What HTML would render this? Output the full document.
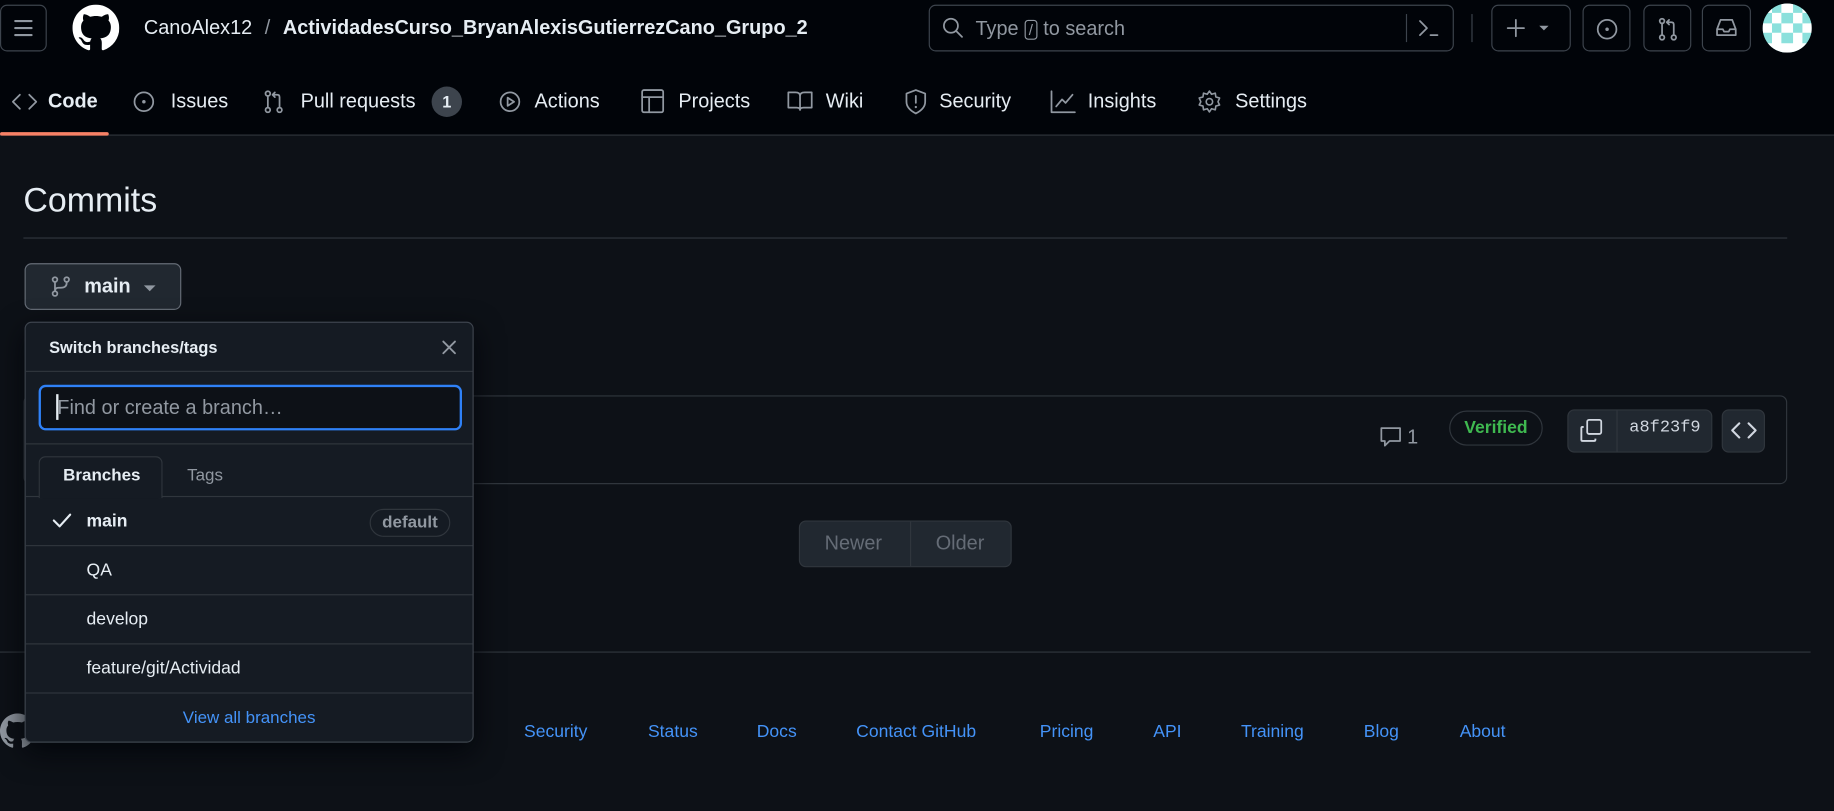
<!DOCTYPE html>
<html><head><meta charset="utf-8"><style>
*{box-sizing:border-box;margin:0;padding:0}
html,body{width:1834px;height:811px;overflow:hidden;background:#0d1117}
#w{position:absolute;left:0;top:0;width:1568px;height:693px;transform:scale(1.16964);transform-origin:0 0;font-family:"Liberation Sans",sans-serif;color:#e6edf3;background:#0d1117}
.a{position:absolute}
.hdr{left:0;top:0;width:1568px;height:116px;background:#010409;border-bottom:1px solid #30363d}
.btn{position:absolute;border:1px solid #3d444d;border-radius:6px}
.nav{position:absolute;top:77px;font-size:17px;color:#e6edf3;line-height:20px}
svg{position:absolute}
.ic{fill:none;stroke:#9198a1;stroke-width:1.5;stroke-linecap:round;stroke-linejoin:round}
.row{position:absolute;left:0;width:382px;height:42px;border-top:1px solid #30363d;font-size:15px;line-height:42px;padding-left:52px}
.ft{position:absolute;top:617px;font-size:15px;color:#4493f8}
</style></head><body><div id="w">
<div class="a hdr"></div>
<div class="btn" style="left:0;top:4px;width:40px;height:40px"></div>
<svg style="left:11px;top:15px" width="18" height="18" viewBox="0 0 18 18"><path d="M2 3h14M2 9h14M2 15h14" stroke="#9198a1" stroke-width="1.8" stroke-linecap="round"/></svg>
<svg style="left:62px;top:4px" width="40" height="40" viewBox="0 0 16 16"><path fill="#fff" d="M8 0C3.58 0 0 3.58 0 8c0 3.54 2.29 6.53 5.47 7.59.4.07.55-.17.55-.38 0-.19-.01-.82-.01-1.49-2.01.37-2.53-.49-2.69-.94-.09-.23-.48-.94-.82-1.13-.28-.15-.68-.52-.01-.53.63-.01 1.08.58 1.23.82.72 1.21 1.87.87 2.33.66.07-.52.28-.87.51-1.07-1.78-.2-3.64-.89-3.64-3.95 0-.87.31-1.59.82-2.15-.08-.2-.36-1.02.08-2.12 0 0 .67-.21 2.2.82.64-.18 1.32-.27 2-.27.68 0 1.36.09 2 .27 1.53-1.04 2.2-.82 2.2-.82.44 1.1.16 1.92.08 2.12.51.56.82 1.27.82 2.15 0 3.07-1.87 3.75-3.65 3.95.29.25.54.73.54 1.48 0 1.07-.01 1.93-.01 2.2 0 .21.15.46.55.38A8.013 8.013 0 0016 8c0-4.42-3.58-8-8-8z"/></svg>
<div class="a" style="left:123px;top:14px;font-size:17px;line-height:20px;white-space:nowrap">CanoAlex12 <span style="color:#9198a1;margin:0 6px">/</span> <b>ActividadesCurso_BryanAlexisGutierrezCano_Grupo_2</b></div>
<div class="btn" style="left:794px;top:4px;width:449px;height:40px;border-color:#3d444d"></div>
<svg style="left:805px;top:14px" width="20" height="20" viewBox="0 0 20 20"><circle cx="8" cy="8" r="6" class="ic" stroke-width="1.8"/><path d="M12.5 12.5l5 5" class="ic" stroke-width="1.8"/></svg>
<div class="a" style="left:834px;top:15px;font-size:17px;color:#9198a1;line-height:20px">Type <span style="border:1px solid #9198a1;border-radius:3px;padding:0 3px;font-size:13px">/</span> to search</div>
<div class="a" style="left:1202px;top:12px;width:1px;height:24px;background:#3d444d"></div>
<svg style="left:1212px;top:15px" width="20" height="18" viewBox="0 0 20 18"><path d="M2 3l6 6-6 6M11 15h6" class="ic" stroke-width="1.6"/></svg>
<div class="a" style="left:1258px;top:12px;width:1px;height:24px;background:#3d444d"></div>
<div class="btn" style="left:1275px;top:4px;width:68px;height:40px"></div>
<svg style="left:1287px;top:15px" width="44" height="18" viewBox="0 0 44 18"><path d="M9 2v14M2 9h14" class="ic" stroke-width="1.8"/><path d="M29 7h8l-4 4z" fill="#9198a1"/></svg>
<div class="btn" style="left:1353px;top:4px;width:41px;height:40px"></div>
<svg style="left:1364px;top:15px" width="20" height="20" viewBox="0 0 20 20"><circle cx="10" cy="10" r="8" class="ic"/><circle cx="10" cy="10" r="1.5" fill="#9198a1"/></svg>
<div class="btn" style="left:1405px;top:4px;width:41px;height:40px"></div>
<svg style="left:1416px;top:14px" width="20" height="22" viewBox="0 0 20 22"><circle cx="5" cy="4" r="2" class="ic"/><circle cx="5" cy="18" r="2" class="ic"/><circle cx="15" cy="18" r="2" class="ic"/><path d="M5 6v10M15 16V7q0-2-2-2h-3M11 3l-2 2 2 2" class="ic"/></svg>
<div class="btn" style="left:1455px;top:4px;width:42px;height:40px"></div>
<svg style="left:1466px;top:15px" width="20" height="18" viewBox="0 0 20 18"><path d="M2 10l3-8h10l3 8v5H2zM2 10h5l1 2h4l1-2h5" class="ic"/></svg>
<svg style="left:1507px;top:3px" width="42" height="42" viewBox="0 0 42 42"><defs><clipPath id="c"><circle cx="21" cy="21" r="21"/></clipPath></defs><g clip-path="url(#c)"><rect width="42" height="42" fill="#8be0dc"/><path fill="#fff" d="M0 0h8v8H0zM16 0h10v8H16zM34 0h8v8h-8zM8 8h8v9H8zM26 8h8v9h-8zM0 17h8v8H0zM16 17h10v8H16zM34 17h8v8h-8zM8 25h8v9H8zM26 25h8v9h-8zM0 34h42v8H0z"/></g></svg>

<!-- nav -->
<svg style="left:10px;top:78px" width="22" height="18" viewBox="0 0 22 18"><path d="M7 3L1 9l6 6M15 3l6 6-6 6" class="ic"/></svg>
<div class="nav" style="left:41px;font-weight:bold">Code</div>
<div class="a" style="left:0;top:113px;width:93px;height:3px;background:#f78166;border-radius:2px"></div>
<svg style="left:113px;top:77px" width="20" height="20" viewBox="0 0 20 20"><circle cx="10" cy="10" r="8" class="ic"/><circle cx="10" cy="10" r="1.5" fill="#9198a1"/></svg>
<div class="nav" style="left:146px">Issues</div>
<svg style="left:224px;top:76px" width="20" height="22" viewBox="0 0 20 22"><circle cx="5" cy="4" r="2" class="ic"/><circle cx="5" cy="18" r="2" class="ic"/><circle cx="15" cy="18" r="2" class="ic"/><path d="M5 6v10M15 16V7q0-2-2-2h-3M11 3l-2 2 2 2" class="ic"/></svg>
<div class="nav" style="left:257px">Pull requests</div>
<div class="a" style="left:369px;top:74px;width:26px;height:26px;border-radius:13px;background:#3d444d;font-size:14px;font-weight:bold;text-align:center;line-height:26px">1</div>
<svg style="left:426px;top:77px" width="20" height="20" viewBox="0 0 20 20"><circle cx="10" cy="10" r="8" class="ic"/><path d="M8 6.5v7l5.5-3.5z" class="ic"/></svg>
<div class="nav" style="left:457px">Actions</div>
<svg style="left:548px;top:76px" width="20" height="21" viewBox="0 0 20 21"><rect x="1" y="1" width="18" height="19" rx="1.5" class="ic"/><path d="M1 7h18M7 7v13" class="ic"/></svg>
<div class="nav" style="left:580px">Projects</div>
<svg style="left:673px;top:77px" width="22" height="18" viewBox="0 0 22 18"><path d="M1 2h6q4 0 4 3v12q0-2-3-2H1zM21 2h-6q-4 0-4 3v12q0-2 3-2h7z" class="ic"/></svg>
<div class="nav" style="left:706px">Wiki</div>
<svg style="left:773px;top:76px" width="20" height="22" viewBox="0 0 20 22"><path d="M10 1l8 3v7q0 6-8 10Q2 17 2 11V4z" class="ic"/><path d="M10 6v6" class="ic"/><circle cx="10" cy="15.5" r="1" fill="#9198a1"/></svg>
<div class="nav" style="left:803px">Security</div>
<svg style="left:898px;top:77px" width="22" height="20" viewBox="0 0 22 20"><path d="M1 1v18h20M5 14l5-6 3 3 6-7" class="ic"/></svg>
<div class="nav" style="left:930px">Insights</div>
<svg style="left:1023px;top:76px" width="22" height="22" viewBox="0 0 24 24"><circle cx="12" cy="12" r="3" class="ic"/><path d="M12 2l2 3 3.5-1 .5 3.5 3.5 1-1.5 3.5 1.5 3-3.5 1-.5 3.5-3.5-1-2 3-2-3-3.5 1-.5-3.5-3.5-1L4 12 2.5 8.5 6 7.5 6.5 4 10 5z" class="ic"/></svg>
<div class="nav" style="left:1056px">Settings</div>

<!-- content -->
<div class="a" style="left:20px;top:155px;font-size:29px;line-height:34px">Commits</div>
<div class="a" style="left:20px;top:203px;width:1508px;height:1px;background:#30363d"></div>

<div class="a" style="left:20px;top:338px;width:1508px;height:76px;border:1px solid #30363d;border-radius:6px"></div>
<svg style="left:1179px;top:363px" width="20" height="20" viewBox="0 0 20 20"><path d="M2 3h16v11H9l-4 4v-4H2z" class="ic"/></svg>
<div class="a" style="left:1203px;top:364px;font-size:17px;color:#9198a1">1</div>
<div class="a" style="left:1239px;top:351px;width:80px;height:30px;border:1px solid #30363d;border-radius:15px;color:#3fb950;font-size:15px;font-weight:bold;text-align:center;line-height:28px">Verified</div>
<div class="a" style="left:1340px;top:350px;width:124px;height:37px;border:1px solid #30363d;border-radius:6px;background:#212830"></div>
<div class="a" style="left:1382px;top:351px;width:1px;height:35px;background:#30363d"></div>
<svg style="left:1350px;top:357px" width="22" height="22" viewBox="0 0 22 22"><rect x="7" y="2" width="12" height="12" rx="1.5" class="ic" stroke="#d1d7e0" style="stroke:#d1d7e0"/><path d="M4 8H3q-1 0-1 1v10q0 1 1 1h10q1 0 1-1v-1" style="fill:none;stroke:#d1d7e0;stroke-width:1.6"/></svg>
<div class="a" style="left:1393px;top:358px;font-family:'Liberation Mono',monospace;font-size:14.5px;color:#d1d7e0">a8f23f9</div>
<div class="a" style="left:1472px;top:350px;width:37px;height:37px;border:1px solid #30363d;border-radius:6px;background:#212830"></div>
<svg style="left:1480px;top:359px" width="22" height="18" viewBox="0 0 22 18"><path d="M7 3L1 9l6 6M15 3l6 6-6 6" style="fill:none;stroke:#d1d7e0;stroke-width:1.8;stroke-linecap:round;stroke-linejoin:round"/></svg>

<div class="a" style="left:683px;top:445px;width:182px;height:40px;border:1px solid #30363d;border-radius:6px;background:#212830;color:#656c76;font-size:17px;line-height:38px"><span style="position:absolute;left:21px">Newer</span><span style="position:absolute;left:94px;top:0;width:1px;height:38px;background:#30363d"></span><span style="position:absolute;left:116px">Older</span></div>

<div class="a" style="left:0;top:557px;width:1548px;height:1px;background:#30363d"></div>
<svg style="left:0;top:610px" width="30" height="30" viewBox="0 0 16 16"><path fill="#9198a1" d="M8 0C3.58 0 0 3.58 0 8c0 3.54 2.29 6.53 5.47 7.59.4.07.55-.17.55-.38 0-.19-.01-.82-.01-1.49-2.01.37-2.530-.49-2.69-.94-.09-.23-.48-.94-.82-1.13-.28-.15-.68-.52-.01-.53.63-.01 1.08.58 1.23.82.72 1.21 1.87.87 2.33.66.07-.52.28-.87.51-1.07-1.78-.2-3.64-.89-3.64-3.95 0-.87.31-1.59.82-2.150-.08-.2-.36-1.02.08-2.12 0 0 .67-.21 2.2.82.64-.18 1.32-.27 2-.27.68 0 1.36.09 2 .27 1.53-1.04 2.2-.82 2.2-.82.44 1.1.16 1.92.08 2.12.51.56.82 1.27.82 2.15 0 3.07-1.87 3.75-3.65 3.95.29.25.54.73.54 1.48 0 1.07-.01 1.93-.01 2.2 0 .21.15.46.55.38A8.013 8.013 0 0016 8c0-4.42-3.58-8-8-8z"/></svg>
<div class="ft" style="left:448px">Security</div>
<div class="ft" style="left:554px">Status</div>
<div class="ft" style="left:647px">Docs</div>
<div class="ft" style="left:732px">Contact GitHub</div>
<div class="ft" style="left:889px">Pricing</div>
<div class="ft" style="left:986px">API</div>
<div class="ft" style="left:1061px">Training</div>
<div class="ft" style="left:1166px">Blog</div>
<div class="ft" style="left:1248px">About</div>

<!-- branch button -->
<div class="a" style="left:21px;top:225px;width:134px;height:40px;border:1px solid #656c76;border-radius:6px;background:#212830"></div>
<svg style="left:43px;top:236px" width="18" height="18" viewBox="0 0 18 18"><circle cx="4" cy="3" r="2" class="ic"/><circle cx="4" cy="15" r="2" class="ic"/><circle cx="14" cy="3" r="2" class="ic"/><path d="M4 5v8M14 5v1q0 4-5 4H7q-3 0-3 3" class="ic"/></svg>
<div class="a" style="left:72px;top:235px;font-size:17px;font-weight:bold;line-height:20px">main</div>
<svg style="left:122px;top:242px" width="12" height="8" viewBox="0 0 12 8"><path d="M1 2h10L6 7z" fill="#9198a1"/></svg>

<!-- dropdown -->
<div class="a" style="left:21px;top:275px;width:384px;height:360px;background:#151b23;border:1px solid #3d444d;border-radius:6px;box-shadow:0 8px 24px rgba(1,4,9,.8);overflow:hidden">
 <div class="a" style="left:20px;top:13px;font-size:14px;font-weight:bold;line-height:17px">Switch branches/tags</div>
 <svg style="left:355px;top:14px" width="14" height="14" viewBox="0 0 14 14"><path d="M2 2l10 10M12 2L2 12" stroke="#9198a1" stroke-width="1.6" stroke-linecap="round"/></svg>
 <div class="a" style="left:0;top:41px;width:384px;height:1px;background:#30363d"></div>
 <div class="a" style="left:11px;top:53px;width:362px;height:39px;border:2px solid #2f81f7;border-radius:6px;background:#0d1117"></div>
 <div class="a" style="left:26px;top:61px;width:1.5px;height:22px;background:#e6edf3"></div>
 <div class="a" style="left:27px;top:63px;font-size:17px;color:#9198a1;line-height:20px">Find or create a branch…</div>
 <div class="a" style="left:0;top:103px;width:384px;height:1px;background:#30363d"></div>
 <div class="a" style="left:11px;top:114px;width:106px;height:36px;border:1px solid #30363d;border-bottom:none;border-radius:6px 6px 0 0;background:#151b23;z-index:2"></div>
 <div class="a" style="left:32px;top:123px;font-size:14.5px;font-weight:bold;z-index:3">Branches</div>
 <div class="a" style="left:138px;top:123px;font-size:14.5px;color:#9198a1">Tags</div>
 <div class="row" style="top:148px;font-weight:bold">main<span style="position:absolute;left:294px;top:10px;width:69px;height:24px;border:1px solid #30363d;border-radius:12px;line-height:22px;text-align:center;color:#9198a1;font-size:14.5px">default</span></div>
 <svg style="left:22px;top:162px" width="18" height="14" viewBox="0 0 18 14"><path d="M2 7l5 5L16 2" fill="none" stroke="#e6edf3" stroke-width="1.8" stroke-linecap="round" stroke-linejoin="round"/></svg>
 <div class="row" style="top:190px">QA</div>
 <div class="row" style="top:232px">develop</div>
 <div class="row" style="top:274px">feature/git/Actividad</div>
 <div class="row" style="top:316px;padding:0;text-align:center;color:#4493f8;font-size:14.5px">View all branches</div>
</div>
</div></body></html>
